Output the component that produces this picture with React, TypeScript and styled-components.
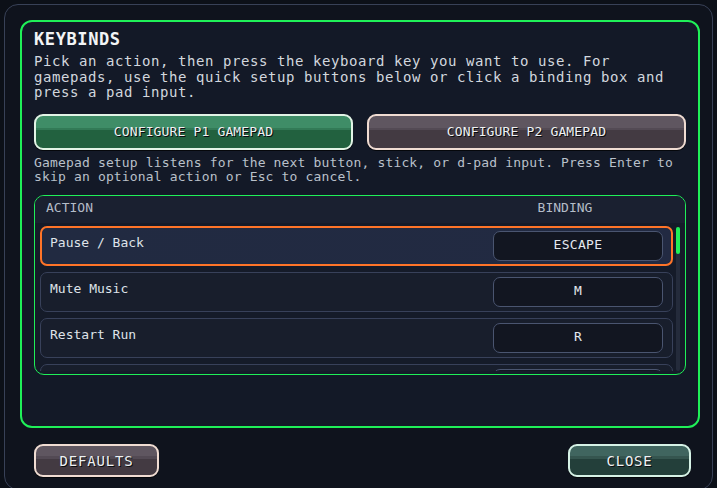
import React from "react";
import styled, { createGlobalStyle } from "styled-components";

const mono = `"DejaVu Sans Mono", "Liberation Mono", monospace`;

const GlobalStyle = createGlobalStyle`
  html, body {
    margin: 0;
    padding: 0;
    background: #0c1018;
    overflow: hidden;
  }
  * {
    box-sizing: border-box;
  }
`;

const Frame = styled.div`
  margin: 4px;
  height: 486px;
  width: 709px;
  border: 1px solid #384157;
  border-radius: 14px;
  background: #0f131d;
  padding: 15px 12px 0 15px;
  display: flex;
  flex-direction: column;
  font-family: ${mono};
`;

const Panel = styled.section`
  height: 408px;
  border: 2px solid #1ff058;
  border-radius: 12px;
  background: #131927;
  padding: 7px 12px 0 12px;
  display: flex;
  flex-direction: column;
`;

const Title = styled.h1`
  margin: 0;
  font-size: 17px;
  line-height: 20px;
  font-weight: bold;
  letter-spacing: 0.6px;
  color: #f2f4f6;
`;

const Description = styled.p`
  margin: 5px 0 0 0;
  font-size: 14px;
  line-height: 15.5px;
  letter-spacing: 0.57px;
  color: #d2d7de;
`;

const PadRow = styled.div`
  margin-top: 13px;
  display: flex;
  gap: 14px;
`;

const palette = {
  green: { top: "#3f8d67", mid: "#327a56", bottom: "#22613f", edge: "#e2f4e6" },
  mauve: { top: "#5f5660", mid: "#534a54", bottom: "#433a42", edge: "#f0dcd2" },
  teal: { top: "#40655f", mid: "#35554f", bottom: "#233f3a", edge: "#d6f2e6" },
};

type Tone = keyof typeof palette;

const PixelButton = styled.button<{ $tone: Tone; $w?: string; $h: number; $size: number; $track: number }>`
  flex: ${(p) => (p.$w ? "none" : "1")};
  width: ${(p) => p.$w || "auto"};
  height: ${(p) => p.$h}px;
  border: 2px solid ${(p) => palette[p.$tone].edge};
  border-radius: 9px;
  background: linear-gradient(
    to bottom,
    ${(p) => palette[p.$tone].top} 0,
    ${(p) => palette[p.$tone].top} 36%,
    ${(p) => palette[p.$tone].mid} 36%,
    ${(p) => palette[p.$tone].mid} 44%,
    ${(p) => palette[p.$tone].bottom} 44%,
    ${(p) => palette[p.$tone].bottom} 100%
  );
  box-shadow: 0 1px 0 #05070b;
  color: #eef1f3;
  font-family: ${mono};
  font-size: ${(p) => p.$size}px;
  letter-spacing: ${(p) => p.$track}px;
  text-shadow: 1px 1px 0 #0a0c10;
  padding: 0;
  cursor: pointer;
`;

const Hint = styled.p`
  margin: 6px 0 0 0;
  font-size: 13px;
  line-height: 14px;
  letter-spacing: 0.16px;
  color: #b9c0ca;
`;

const Table = styled.div`
  margin-top: 11px;
  height: 180px;
  border: 1px solid #1ff058;
  border-radius: 10px;
  background: #151b29;
  overflow: hidden;
  display: flex;
  flex-direction: column;
  padding-bottom: 3px;
`;

const Header = styled.div`
  height: 27px;
  flex: none;
  background: #1a2030;
  display: flex;
  align-items: center;
  padding: 0 0 3px 11px;
  font-size: 13px;
  color: #b4bcc8;
`;

const HeadCell = styled.span<{ $w?: number }>`
  flex: ${(p) => (p.$w ? "none" : "1")};
  width: ${(p) => (p.$w ? `${p.$w}px` : "auto")};
  text-align: ${(p) => (p.$w ? "center" : "left")};
`;

const Body = styled.div`
  flex: 1;
  min-height: 0;
  display: flex;
  gap: 3px;
  padding: 3px 5px 0 5px;
  overflow: hidden;
`;

const Rows = styled.div`
  width: 633px;
  display: flex;
  flex-direction: column;
  gap: 6px;
`;

const Row = styled.div<{ $active?: boolean }>`
  flex: none;
  height: 40px;
  border: ${(p) => (p.$active ? "2px solid #ff7428" : "1px solid #38415a")};
  border-radius: 7px;
  background: ${(p) => (p.$active ? "linear-gradient(to right, #212a41, #222a42)" : "#181e2c")};
  padding: ${(p) => (p.$active ? "3px 8px 3px 8px" : "4px 9px 4px 9px")};
  display: flex;
  align-items: flex-start;
  font-size: 13px;
  color: #dfe3e9;
`;

const ActionLabel = styled.span`
  flex: 1;
  padding-top: 4px;
  line-height: 16px;
`;

const KeyBox = styled.div`
  width: 170px;
  height: 30px;
  border: 1px solid #4a5570;
  border-radius: 7px;
  background: #121621;
  display: flex;
  align-items: center;
  justify-content: center;
  padding-bottom: 2px;
  font-size: 13px;
  letter-spacing: 0.3px;
  color: #e4e8ee;
`;

const Track = styled.div`
  width: 4px;
  height: 144px;
  margin-top: 1px;
  border-radius: 2px;
  background: #242b3b;
  display: flex;
  flex-direction: column;
`;

const Thumb = styled.div`
  height: 27px;
  border-radius: 2px;
  background: #1ff058;
`;

const Footer = styled.div`
  margin-top: 16px;
  display: flex;
  justify-content: space-between;
  padding: 0 9px 0 14px;
`;

// the fourth row sits below the fold of the list; only its frame peeks through
const bindings = [
  { action: "Pause / Back", key: "ESCAPE" },
  { action: "Mute Music", key: "M" },
  { action: "Restart Run", key: "R" },
  { action: "", key: "" },
];

export default function App() {
  return (
    <>
      <GlobalStyle />
      <Frame>
        <Panel>
          <Title>KEYBINDS</Title>
          <Description>
            Pick an action, then press the keyboard key you want to use. For
            gamepads, use the quick setup buttons below or click a binding box and
            press a pad input.
          </Description>
          <PadRow>
            <PixelButton $tone="green" $h={36} $size={13} $track={0.15}>
              CONFIGURE P1 GAMEPAD
            </PixelButton>
            <PixelButton $tone="mauve" $h={36} $size={13} $track={0.15}>
              CONFIGURE P2 GAMEPAD
            </PixelButton>
          </PadRow>
          <Hint>
            Gamepad setup listens for the next button, stick, or d-pad input. Press Enter to
            skip an optional action or Esc to cancel.
          </Hint>
          <Table>
            <Header>
              <HeadCell>ACTION</HeadCell>
              <HeadCell $w={140}>BINDING</HeadCell>
              <HeadCell $w={50} />
            </Header>
            <Body>
              <Rows>
                {bindings.map((b, i) => (
                  <Row key={i} $active={i === 0}>
                    <ActionLabel>{b.action}</ActionLabel>
                    <KeyBox>{b.key}</KeyBox>
                  </Row>
                ))}
              </Rows>
              <Track>
                <Thumb />
              </Track>
            </Body>
          </Table>
        </Panel>
        <Footer>
          <PixelButton $tone="mauve" $w="125px" $h={33} $size={14} $track={0.8}>
            DEFAULTS
          </PixelButton>
          <PixelButton $tone="teal" $w="123px" $h={33} $size={14} $track={0.8}>
            CLOSE
          </PixelButton>
        </Footer>
      </Frame>
    </>
  );
}
